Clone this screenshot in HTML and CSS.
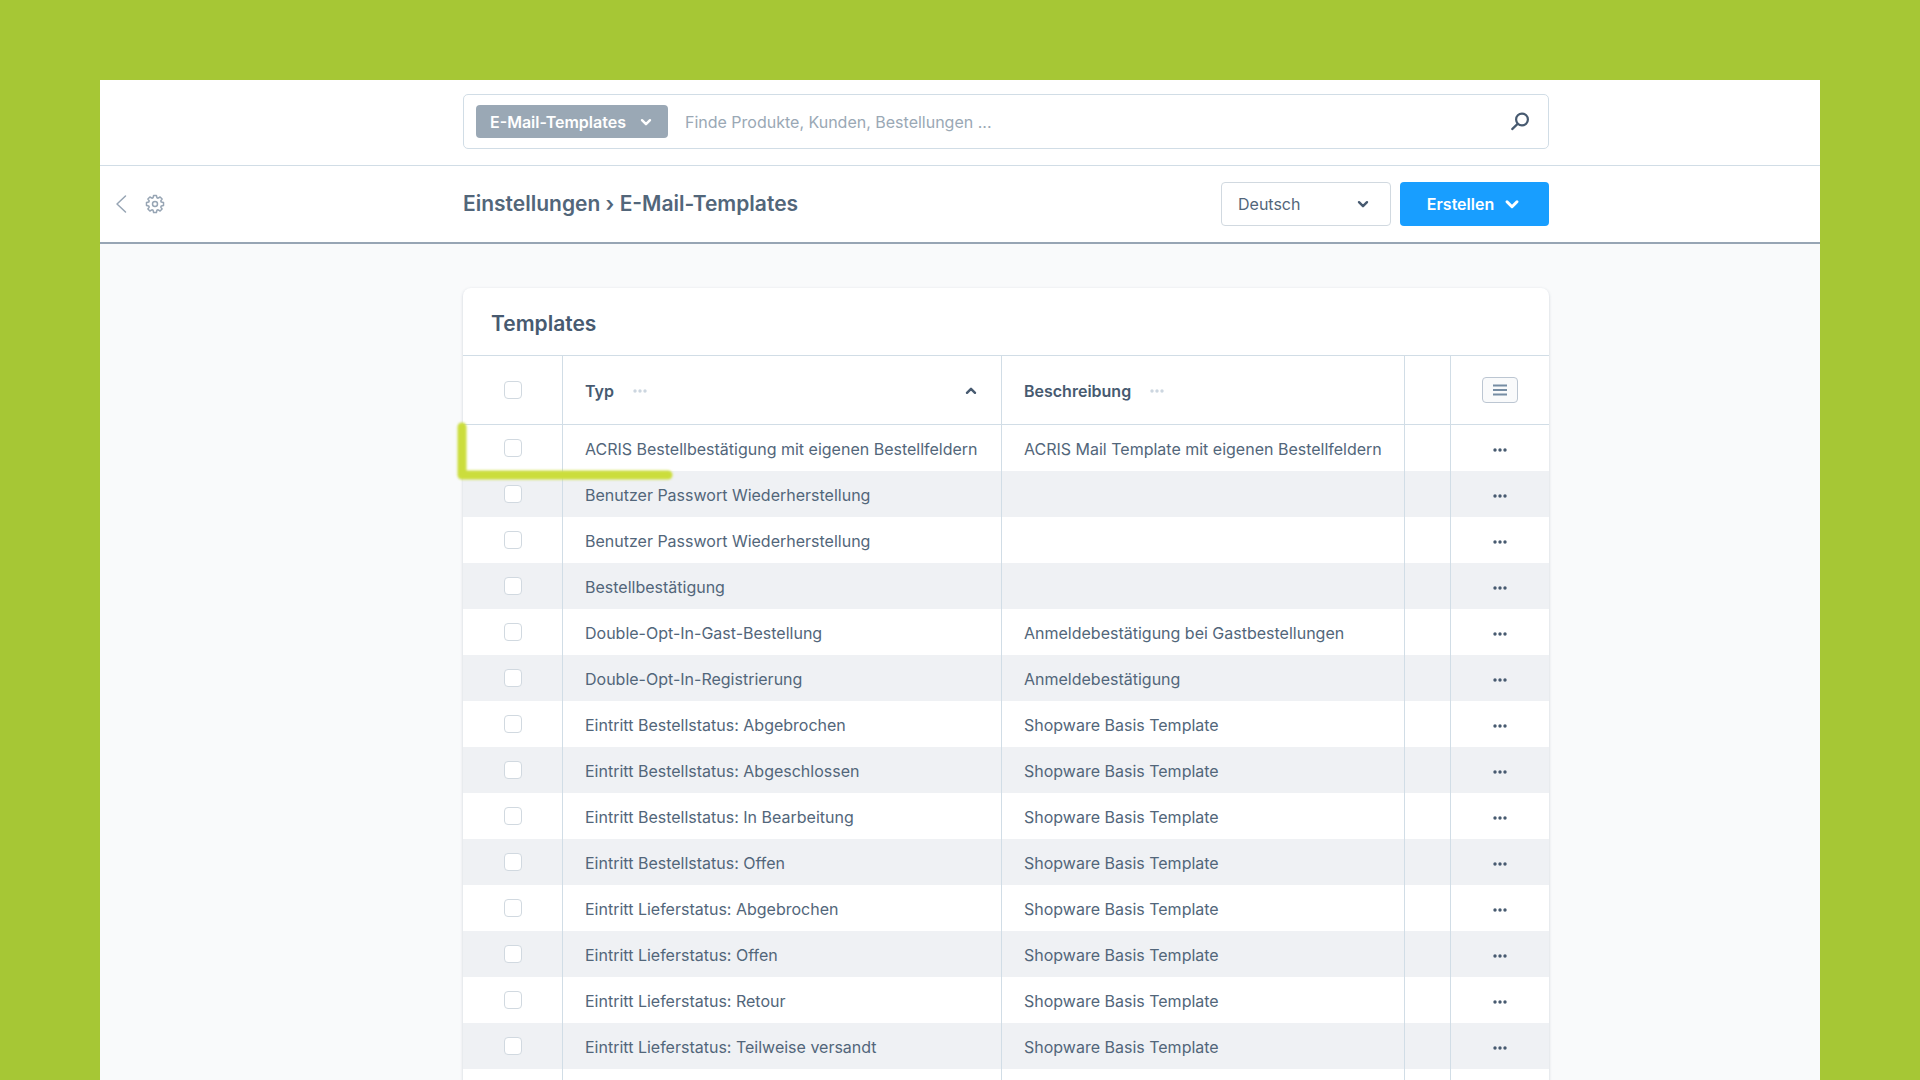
FILE: index.html
```html
<!DOCTYPE html>
<html lang="de">
<head>
<meta charset="utf-8">
<meta name="viewport" content="width=device-width, initial-scale=1">
<title>E-Mail-Templates</title>
<link rel="stylesheet" href="styles.css">
</head>
<body>
<svg class="sprite" aria-hidden="true">
  <symbol id="chevron" viewBox="0 0 16 16"><path d="M4 6.200 8 10.200 12 6.200" fill="none" stroke="currentColor" stroke-width="2.400" stroke-linecap="round" stroke-linejoin="round"/></symbol>
  <symbol id="dots" viewBox="0 0 16 6"><circle cx="3" cy="3" r="1.700"/><circle cx="8" cy="3" r="1.700"/><circle cx="13" cy="3" r="1.700"/></symbol>
</svg>
<div class="app">
  <header class="topbar">
    <div class="wrap">
      <form class="search" role="search">
        <button type="button" class="search-type">E-Mail-Templates
          <svg class="icon"><use href="#chevron"/></svg>
        </button>
        <input class="search-input" type="search" aria-label="Suche" placeholder="Finde Produkte, Kunden, Bestellungen ...">
        <button type="submit" class="search-go" aria-label="Suchen">
          <svg width="20" height="20" viewBox="0 0 20 20" fill="none" stroke="currentColor" stroke-width="2.200" stroke-linecap="round"><circle cx="12" cy="7.500" r="5.900"/><path d="m7.600 11.900-5.400 5.200"/></svg>
        </button>
      </form>
    </div>
  </header>
  <div class="pagebar">
    <nav class="pagenav">
      <a href="#" aria-label="Zurück"><svg width="12" height="20" viewBox="0 0 12 20" fill="none" stroke="currentColor" stroke-width="1.500" stroke-linecap="round" stroke-linejoin="round"><path d="M10.500 2 2 10l8.500 8"/></svg></a>
      <a href="#" aria-label="Einstellungen"><svg width="20" height="20" viewBox="0 0 20 20" fill="none" stroke="currentColor" stroke-width="1.500" stroke-linejoin="round"><circle cx="10" cy="10" r="2.500"/><path d="M8.600 1.500h2.800l.5 2.200 1.200.5 2-1.200 2 2-1.300 1.900.5 1.200 2.200.5v2.800l-2.200.5-.5 1.200 1.300 1.900-2 2-2-1.200-1.200.5-.5 2.200H8.600l-.5-2.200-1.200-.5-2 1.200-2-2 1.300-1.900-.5-1.200-2.200-.5V8.600l2.200-.5.5-1.200L2.900 5l2-2 2 1.200 1.200-.5z"/></svg></a>
    </nav>
    <div class="wrap pagehead">
      <h1>Einstellungen › E-Mail-Templates</h1>
      <div class="actions">
        <div class="lang">
          <select aria-label="Sprache"><option>Deutsch</option></select>
          <svg class="icon"><use href="#chevron"/></svg>
        </div>
        <button type="button" class="create">Erstellen
          <svg class="icon large"><use href="#chevron"/></svg>
        </button>
      </div>
    </div>
  </div>
  <main class="content">
    <div class="wrap">
      <section class="card">
        <h2>Templates</h2>
        <table>
          <colgroup><col class="c-check"><col class="c-type"><col class="c-desc"><col class="c-gap"><col class="c-menu"></colgroup>
          <thead>
            <tr>
              <th><input type="checkbox" aria-label="Alle auswählen"></th>
              <th><div class="headcell">Typ <svg class="dots"><use href="#dots"/></svg><svg class="icon up"><use href="#chevron"/></svg></div></th>
              <th><div class="headcell">Beschreibung <svg class="dots"><use href="#dots"/></svg></div></th>
              <th></th>
              <th><button type="button" class="columns" aria-label="Spalten"><svg width="14" height="12" viewBox="0 0 14 12" stroke="currentColor" stroke-width="1.800"><path d="M0 1.500h14M0 6h14M0 10.500h14"/></svg></button></th>
            </tr>
          </thead>
          <tbody id="rows"></tbody>
        </table>
        <svg class="marker" width="222" height="62" viewBox="0 0 222 62" fill="none" aria-hidden="true"><path d="M6 6v48h206" stroke="#cbdd3c" stroke-width="9" stroke-linecap="round" stroke-linejoin="round"/></svg>
      </section>
    </div>
  </main>
</div>
<script src="rows.js"></script>
</body>
</html>
```
FILE: rows.js
```js
const shop = "Shopware Basis Template";
const templates = [
  ["ACRIS Bestellbestätigung mit eigenen Bestellfeldern", "ACRIS Mail Template mit eigenen Bestellfeldern"],
  ["Benutzer Passwort Wiederherstellung", ""],
  ["Benutzer Passwort Wiederherstellung", ""],
  ["Bestellbestätigung", ""],
  ["Double-Opt-In-Gast-Bestellung", "Anmeldebestätigung bei Gastbestellungen"],
  ["Double-Opt-In-Registrierung", "Anmeldebestätigung"],
  ["Eintritt Bestellstatus: Abgebrochen", shop],
  ["Eintritt Bestellstatus: Abgeschlossen", shop],
  ["Eintritt Bestellstatus: In Bearbeitung", shop],
  ["Eintritt Bestellstatus: Offen", shop],
  ["Eintritt Lieferstatus: Abgebrochen", shop],
  ["Eintritt Lieferstatus: Offen", shop],
  ["Eintritt Lieferstatus: Retour", shop],
  ["Eintritt Lieferstatus: Teilweise versandt", shop],
  ["", ""],
];
document.getElementById("rows").innerHTML = templates.map(([type, desc]) => `
  <tr>
    <td><input type="checkbox" aria-label="Auswählen"></td>
    <td>${type}</td>
    <td>${desc}</td>
    <td></td>
    <td><button type="button" class="more" aria-label="Aktionen"><svg class="dots"><use href="#dots"/></svg></button></td>
  </tr>`).join("");
```
FILE: styles.css
```css
* { box-sizing: border-box; }

body {
  margin: 0;
  padding: 80px 100px 0;
  height: 100vh;
  overflow: hidden;
  background: #a6c735;
  color: #52667a;
  font: 16px/24px Inter, sans-serif;
}

button, input, select { font: inherit; color: inherit; }
button { cursor: pointer; padding: 0; border: 0; background: none; }
h1, h2 { margin: 0; font-size: 21px; line-height: 28px; font-weight: 600; }

.sprite { position: absolute; width: 0; height: 0; }
.icon { width: 16px; height: 16px; flex: none; }
.icon.large { width: 20px; height: 20px; }
.icon.up { transform: rotate(180deg); }
.dots { width: 16px; height: 6px; fill: currentColor; }

.app { height: 100%; overflow: hidden; background: #f9fafb; }
.wrap { max-width: 1086px; margin: 0 auto; }

.topbar {
  padding: 14px 0 16px 92px;
  background: #fff;
  border-bottom: 1px solid #d1dde6;
}
.search {
  display: flex;
  align-items: center;
  height: 55px;
  padding: 0 18px 0 12px;
  border: 1px solid #d1dde6;
  border-radius: 5px;
}
.search-type {
  display: flex;
  align-items: center;
  gap: 12px;
  height: 33px;
  padding: 0 14px;
  border-radius: 4px;
  background: #9aa8b5;
  color: #fff;
  font-weight: 600;
}
.search-input {
  flex: 1;
  min-width: 0;
  padding: 0 17px;
  border: 0;
  outline: 0;
  background: none;
}
.search-input::placeholder { color: #9aa8b5; opacity: 1; }
.search-go { display: flex; color: #475a70; }

.pagebar {
  display: grid;
  grid-template-columns: 92px 1fr;
  align-items: center;
  height: 78px;
  background: #fff;
  border-bottom: 2px solid #97a5b4;
}
.pagenav { display: flex; align-items: center; gap: 18px; padding-left: 15px; }
.pagenav a { display: flex; color: #97a5b4; }
.pagehead { display: flex; align-items: center; justify-content: space-between; width: 100%; }
.actions { display: flex; gap: 9px; }
.lang { display: grid; align-items: center; width: 170px; }
.lang > * { grid-area: 1 / 1; }
.lang select {
  width: 100%;
  height: 44px;
  padding: 0 16px;
  appearance: none;
  border: 1px solid #d1d9e0;
  border-radius: 4px;
  background: #fff;
}
.lang .icon { justify-self: end; margin-right: 20px; color: #475a70; pointer-events: none; }
.create {
  display: flex;
  align-items: center;
  justify-content: center;
  gap: 8px;
  width: 149px;
  border-radius: 4px;
  background: #189eff;
  color: #fff;
  font-weight: 600;
}

.content { padding: 44px 0 0 92px; }
.card {
  position: relative;
  background: #fff;
  border-radius: 8px;
  box-shadow: 0 1px 3px rgba(60, 80, 110, .25);
}
.card h2 { padding: 22px 28px 17px; color: #475a70; }

table { width: 100%; table-layout: fixed; border-collapse: separate; border-spacing: 0; }
.c-check { width: 100px; }
.c-desc { width: 403px; }
.c-gap { width: 46px; }
.c-menu { width: 98px; }
th, td { padding: 2px 22px 0; border-right: 1px solid #d1dde6; text-align: left; white-space: nowrap; }
th:last-child, td:last-child { border-right: 0; }
th:first-child, td:first-child, th:last-child, td:last-child { padding: 0; text-align: center; }
th { height: 70px; border-top: 1px solid #d1dde6; border-bottom: 1px solid #d1dde6; font-weight: 600; color: #475a70; }
td { height: 46px; }
tbody tr:nth-child(even) { background: #eff1f4; }
.headcell { display: flex; align-items: center; gap: 18px; }
.headcell .dots { color: #ccd6e0; }
.headcell .up { margin-left: auto; }

input[type="checkbox"] {
  appearance: none;
  display: block;
  width: 18px;
  height: 18px;
  margin: 0 auto;
  border: 1px solid #d1d9e0;
  border-radius: 4px;
  background: #fff;
}
.columns {
  display: inline-flex;
  align-items: center;
  justify-content: center;
  width: 36px;
  height: 26px;
  border: 1px solid #bcc6d2;
  border-radius: 4px;
  background: #f9fafb;
  color: #758ca3;
}
.more { display: flex; margin: 0 auto; padding-top: 3px; color: #475a70; }

.marker { position: absolute; left: -7px; top: 133px; filter: blur(1px); pointer-events: none; }
```
